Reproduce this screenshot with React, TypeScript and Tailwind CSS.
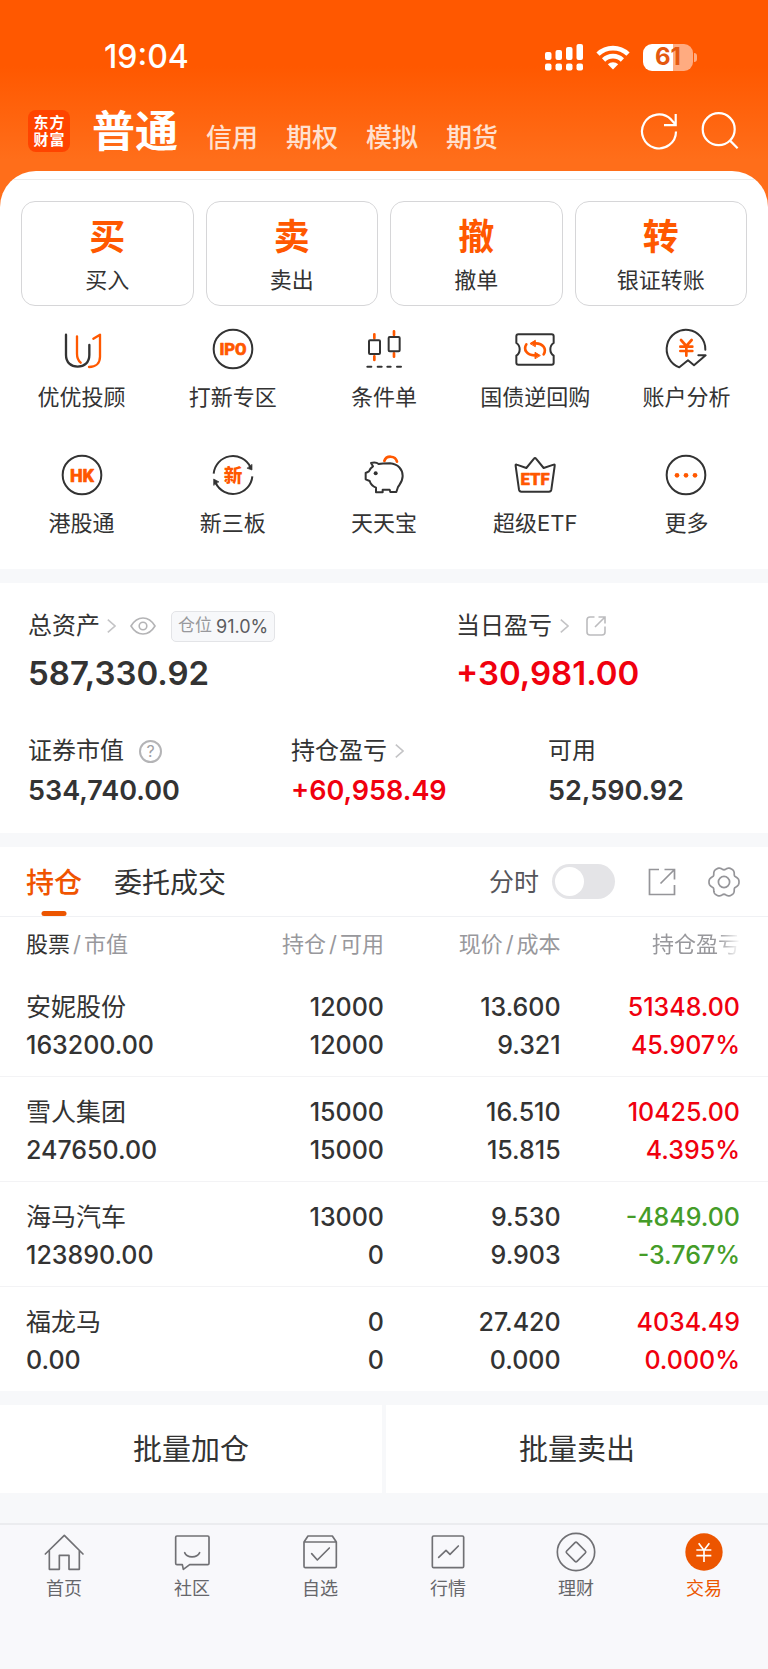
import type { ReactNode } from "react";

const INK = "#333333";
const ORANGE = "#ff5800";

type IconProps = { children: ReactNode; color?: string; width?: number };

function Glyph({ children, color = INK, width = 6 }: IconProps) {
  return (
    <svg
      viewBox="0 0 120 120"
      className="size-10 overflow-visible"
      fill="none"
      stroke={color}
      strokeWidth={width}
      strokeLinecap="round"
      strokeLinejoin="round"
      aria-hidden="true"
    >
      {children}
    </svg>
  );
}

function GlyphText({ children, size, y, stroke = 2 }: { children: string; size: number; y: number; stroke?: number }) {
  return (
    <text
      x="60"
      y={y}
      textAnchor="middle"
      fontSize={size}
      fontWeight="800"
      fontFamily="Roboto, 'Noto Sans CJK SC', sans-serif"
      fill={ORANGE}
      stroke={ORANGE}
      strokeWidth={stroke}
    >
      {children}
    </text>
  );
}

function Chevron() {
  return (
    <svg viewBox="0 0 9 14" className="h-[14px] w-[9px]" fill="none" stroke="#c4c4c6" strokeWidth="1.6" aria-hidden="true">
      <path d="M0.8 0.6 8 7 0.8 13.4" />
    </svg>
  );
}

function gearPath() {
  const points: string[] = [];
  for (let i = 0; i < 120; i++) {
    const t = (i / 120) * Math.PI * 2;
    const r = 13.9 + 1.4 * Math.cos(6 * t) - 0.3 * Math.cos(12 * t);
    points.push(`${(16 + r * Math.cos(t)).toFixed(2)} ${(16 + r * Math.sin(t)).toFixed(2)}`);
  }
  return `M${points.join("L")}Z`;
}

const accounts = ["信用", "期权", "模拟", "期货"];

const actions = [
  { mark: "买", label: "买入" },
  { mark: "卖", label: "卖出" },
  { mark: "撤", label: "撤单" },
  { mark: "转", label: "银证转账" },
];

const services: { label: string; icon: ReactNode }[] = [
  {
    label: "优优投顾",
    icon: (
      <Glyph width={7}>
        <path d="M12 17V78C12 101 27 113 47 113S82 101 82 78V48" />
        <path stroke={ORANGE} d="M45 22V74C45 88 50 96 56 101M94 29L114 17V83C114 102 102 114 81 114" />
      </Glyph>
    ),
  },
  {
    label: "打新专区",
    icon: (
      <Glyph>
        <circle cx="60" cy="60" r="58" />
        <GlyphText size={50} y={79}>IPO</GlyphText>
      </Glyph>
    ),
  },
  {
    label: "条件单",
    icon: (
      <Glyph>
        <path stroke={ORANGE} strokeWidth="8" d="M31 16V28M31 82V93M90 7V18M90 73V83" />
        <rect x="15" y="34" width="33" height="41" rx="3" />
        <rect x="74" y="24" width="33" height="43" rx="3" />
        <path d="M10 113H22M41 113H53M70 113H80M99 113H111" />
      </Glyph>
    ),
  },
  {
    label: "国债逆回购",
    icon: (
      <Glyph>
        <path d="M10 16H110Q116 16 116 22V42Q106 48 106 61T116 80V101Q116 107 110 107H10Q4 107 4 101V80Q14 74 14 61T4 42V22Q4 16 10 16Z" />
        <path stroke={ORANGE} strokeWidth="8" d="M86 76C96 60 84 43 62 43M34 46C24 62 36 79 58 79" />
        <path fill={ORANGE} stroke={ORANGE} strokeWidth="3" d="M46 43L61 34V52ZM75 79L60 70V88Z" />
      </Glyph>
    ),
  },
  {
    label: "账户分析",
    icon: (
      <Glyph>
        <path d="M118 62A58 58 0 1 0 40 115L66 94L84 109L119 79H97" />
        <path stroke={ORANGE} strokeWidth="8" d="M45 33L61 51L77 33M61 51V80M43 53H79M43 66H79" />
      </Glyph>
    ),
  },
  {
    label: "港股通",
    icon: (
      <Glyph>
        <circle cx="60" cy="60" r="58" />
        <GlyphText size={54} y={80}>HK</GlyphText>
      </Glyph>
    ),
  },
  {
    label: "新三板",
    icon: (
      <Glyph>
        <path strokeLinecap="butt" d="M2 56A58 58 0 0 1 112 36M118 64A58 58 0 0 1 8 84" />
        <path fill={INK} strokeWidth="2" d="M117 29V45L103 40ZM2 90V72L17 80Z" />
        <GlyphText size={56} y={81} stroke={0}>新</GlyphText>
      </Glyph>
    ),
  },
  {
    label: "天天宝",
    icon: (
      <Glyph>
        <path stroke={ORANGE} strokeWidth="8" d="M61 18C66 1 94 0 99 20" />
        <path d="M21 24C29 22 38 22 44 27C54 25 66 25 78 25C103 27 116 44 116 63C116 80 107 88 102 96L97 111H79L77 104H56V112H36V98C26 94 20 88 17 78L5 73V54L15 49C17 42 21 38 27 34Z" />
        <circle cx="35" cy="55" r="6" fill={INK} stroke="none" />
      </Glyph>
    ),
  },
  {
    label: "超级ETF",
    icon: (
      <Glyph>
        <path d="M5 29Q1 27 2 33L12 104Q13 110 19 110H102Q108 110 109 104L119 33Q120 27 116 29L86 39L63 11Q60 7 57 11L34 39Z" />
        <GlyphText size={50} y={90}>ETF</GlyphText>
      </Glyph>
    ),
  },
  {
    label: "更多",
    icon: (
      <Glyph>
        <circle cx="60" cy="60" r="58" />
        <g fill={ORANGE} stroke="none">
          <circle cx="33" cy="61" r="7" />
          <circle cx="60" cy="61" r="7" />
          <circle cx="87" cy="61" r="7" />
        </g>
      </Glyph>
    ),
  },
];

const holdings = [
  { name: "安妮股份", value: "163200.00", held: "12000", free: "12000", price: "13.600", cost: "9.321", profit: "51348.00", rate: "45.907%", up: true },
  { name: "雪人集团", value: "247650.00", held: "15000", free: "15000", price: "16.510", cost: "15.815", profit: "10425.00", rate: "4.395%", up: true },
  { name: "海马汽车", value: "123890.00", held: "13000", free: "0", price: "9.530", cost: "9.903", profit: "-4849.00", rate: "-3.767%", up: false },
  { name: "福龙马", value: "0.00", held: "0", free: "0", price: "27.420", cost: "0.000", profit: "4034.49", rate: "0.000%", up: true },
];

const GREY = "#707074";

const tabs: { label: string; active?: boolean; icon: ReactNode }[] = [
  {
    label: "首页",
    icon: (
      <Glyph color={GREY} width={5}>
        <path d="M4 66L61 10L117 66M16 56V112H46V70H75V112H106V56" />
      </Glyph>
    ),
  },
  {
    label: "社区",
    icon: (
      <Glyph color={GREY} width={5}>
        <path d="M15 12H107Q111 12 111 16V94Q111 98 107 98H53L34 112L31 98H15Q11 98 11 94V16Q11 12 15 12ZM38 62C45 79 75 79 83 62" />
      </Glyph>
    ),
  },
  {
    label: "自选",
    icon: (
      <Glyph color={GREY} width={5}>
        <path d="M12 30L24 12H97L109 30V103Q109 107 105 107H16Q12 107 12 103ZM12 30H109M35 65L52 84L88 48" />
      </Glyph>
    ),
  },
  {
    label: "行情",
    icon: (
      <Glyph color={GREY} width={5}>
        <rect x="13" y="12" width="94" height="95" rx="4" />
        <path d="M32 76L54 55L66 67L91 42" />
      </Glyph>
    ),
  },
  {
    label: "理财",
    icon: (
      <Glyph color={GREY} width={5}>
        <circle cx="60" cy="60" r="56" />
        <path d="M57 32Q60 29 63 32L88 57Q91 60 88 63L63 88Q60 91 57 88L32 63Q29 60 32 57Z" />
      </Glyph>
    ),
  },
  {
    label: "交易",
    active: true,
    icon: (
      <Glyph color="#ffffff" width={5}>
        <circle cx="60" cy="60" r="56" fill="#ec5500" stroke="none" />
        <path strokeLinecap="butt" d="M44 34L60 55L76 34M60 55V90M37 54H82M37 71H82" />
      </Glyph>
    ),
  },
];

function StatusBar() {
  return (
    <div className="flex h-[42px] items-center justify-between pr-[71px] pl-[104px]">
      <time className="text-[32px] font-medium">19:04</time>
      <div className="flex items-center gap-[13px]">
        <svg viewBox="0 0 38 27" className="h-[27px] w-[38px]" fill="#fff" aria-hidden="true">
          <rect x="0" y="8" width="6.5" height="8" rx="2" />
          <rect x="10.5" y="6" width="6.5" height="10" rx="2" />
          <rect x="21" y="3" width="6.5" height="13" rx="2" />
          <rect x="31.5" y="0" width="6.5" height="16" rx="2" />
          <rect x="0" y="19.5" width="6.5" height="7" rx="2" />
          <rect x="10.5" y="19.5" width="6.5" height="7" rx="2" />
          <rect x="21" y="19.5" width="6.5" height="7" rx="2" />
          <rect x="31.5" y="19.5" width="6.5" height="7" rx="2" />
        </svg>
        <svg viewBox="0 0 34 25" className="h-[25px] w-[34px]" fill="none" stroke="#fff" strokeWidth="4.6" aria-hidden="true">
          <path d="M2 9.2A21.5 21.5 0 0 1 32 9.2" />
          <path d="M7.6 15A13.4 13.4 0 0 1 26.4 15" />
          <path d="M17 24.5 11.8 19.3A7.6 7.6 0 0 1 22.2 19.3Z" fill="#fff" stroke="none" />
        </svg>
        <div className="flex items-center gap-[1px]">
          <div className="flex h-[27px] w-[50px] items-center justify-center rounded-[9px] bg-[linear-gradient(90deg,#ffffff_60%,#ffab80_60%)] text-[24px] font-bold text-[#e4580f]">
            61
          </div>
          <div className="h-[9px] w-[3px] rounded-r-full bg-[#ffab80]" />
        </div>
      </div>
    </div>
  );
}

function Header() {
  return (
    <header className="pt-9 pb-[1px] text-white">
      <StatusBar />
      <div className="mt-[14px] flex h-[78px] items-center pr-[29px] pl-7">
        <div className="grid size-[42px] grid-cols-[16px_16px] content-center justify-center rounded-lg bg-[#ff4400] text-center text-[15px] leading-[17px] font-bold">
          <span>东</span>
          <span>方</span>
          <span>财</span>
          <span>富</span>
        </div>
        <nav className="ml-[22px] flex items-baseline gap-7">
          <button type="button" className="text-[43px] leading-[60px] font-bold">普通</button>
          <span className="flex items-baseline gap-7">
            {accounts.map((name) => (
              <button key={name} type="button" className="text-[26px] leading-[40px] font-medium text-[#ffe0cf]">
                {name}
              </button>
            ))}
          </span>
        </nav>
        <div className="ml-auto flex items-center gap-[23px]">
          <button type="button" aria-label="刷新">
            <svg viewBox="0 0 38 38" className="size-[38px]" fill="none" stroke="#fff" strokeWidth="2.2" aria-hidden="true">
              <path d="M36 19.5A17 17 0 1 1 31 7.4L35.6 12.6M35.7 2V13.2H24" />
            </svg>
          </button>
          <button type="button" aria-label="搜索">
            <svg viewBox="0 0 38 38" className="size-[38px]" fill="none" stroke="#fff" strokeWidth="2.2" aria-hidden="true">
              <circle cx="17.7" cy="17.2" r="16" />
              <path d="M28.8 28.4 36.6 36.2" />
            </svg>
          </button>
        </div>
      </div>
    </header>
  );
}

function Shortcuts() {
  return (
    <section className="overflow-hidden rounded-t-[36px] bg-white pt-2">
      <div className="border-t border-[#ececec] px-[21px] pt-[21px]">
        <div className="grid grid-cols-4 gap-3">
          {actions.map((a) => (
            <button key={a.label} type="button" className="flex flex-col items-center gap-[6px] rounded-[14px] border border-[#d6d6d8] pt-[13px] pb-[10px]">
              <span className="text-[36px] leading-[44px] font-bold text-[#ff5800]">{a.mark}</span>
              <span className="text-[22px] leading-[30px]">{a.label}</span>
            </button>
          ))}
        </div>
      </div>
      <div className="mt-[23px] grid grid-cols-5 gap-y-[43px] px-[6px] pb-[31px]">
        {services.map((s) => (
          <button key={s.label} type="button" className="flex flex-col items-center gap-[13px]">
            {s.icon}
            <span className="text-[22px] leading-[30px]">{s.label}</span>
          </button>
        ))}
      </div>
    </section>
  );
}

function Assets() {
  return (
    <section className="mt-[14px] bg-white pt-[27px] pb-[26px] pl-7">
      <div className="grid grid-cols-[428fr_312fr]">
        <div>
          <div className="flex h-8 items-center text-[24px]">
            <span>总资产</span>
            <span className="ml-[7px]"><Chevron /></span>
            <button type="button" aria-label="隐藏金额" className="ml-[14px]">
              <svg viewBox="0 0 26 18" className="h-[18px] w-[26px]" fill="none" stroke="#b4b4b6" strokeWidth="1.6" aria-hidden="true">
                <path d="M1 9C4 4 8 1 13 1S22 4 25 9C22 14 18 17 13 17S4 14 1 9Z" />
                <circle cx="13" cy="9" r="3.8" />
              </svg>
            </button>
            <span className="ml-[15px] flex h-[31px] items-center gap-1 rounded-[5px] border border-[#e3e4e7] bg-[#f7f8fa] px-[6px] text-[18px] text-[#5c5c60]">
              <span className="text-[17px] text-[#98989c]">仓位</span>91.0%
            </span>
          </div>
          <p className="mt-[11px] text-[33px] leading-[40px] font-semibold">587,330.92</p>
        </div>
        <div>
          <div className="flex h-8 items-center text-[24px]">
            <span>当日盈亏</span>
            <span className="ml-2"><Chevron /></span>
            <button type="button" aria-label="分享盈亏" className="ml-[17px]">
              <svg viewBox="0 0 20 20" className="size-5" fill="none" stroke="#bcbcbe" strokeWidth="1.6" aria-hidden="true">
                <path d="M8.5 1H4Q1 1 1 4V16Q1 19 4 19H16Q19 19 19 16V10.5M9 11 18.5 1.5M12.5 1H19V7.5" />
              </svg>
            </button>
          </div>
          <p className="mt-[11px] text-[33px] leading-[40px] font-semibold text-[#f0000e]">+30,981.00</p>
        </div>
      </div>
      <div className="mt-[42px] grid grid-cols-[263fr_257fr_220fr]">
        <div>
          <div className="flex h-8 items-center text-[24px]">
            <span>证券市值</span>
            <button type="button" aria-label="说明" className="ml-[15px] flex size-[23px] items-center justify-center rounded-full border-2 border-[#b4b4b6] text-[16px] leading-none text-[#a0a0a4]">
              ?
            </button>
          </div>
          <p className="mt-2 text-[27px] leading-8 font-semibold">534,740.00</p>
        </div>
        <div>
          <div className="flex h-8 items-center text-[24px]">
            <span>持仓盈亏</span>
            <span className="ml-2"><Chevron /></span>
          </div>
          <p className="mt-2 text-[27px] leading-8 font-semibold text-[#f0000e]">+60,958.49</p>
        </div>
        <div>
          <div className="flex h-8 items-center text-[24px]">可用</div>
          <p className="mt-2 text-[27px] leading-8 font-semibold">52,590.92</p>
        </div>
      </div>
    </section>
  );
}

function HoldingsBar() {
  return (
    <div className="flex h-[70px] items-center border-b border-[#f0f1f4] pr-7 pl-[26px]">
      <button type="button" className="relative flex h-full items-center pt-[3px] text-[28px] font-medium text-[#f05400]">
        持仓
        <span className="absolute bottom-0 left-1/2 h-[5px] w-[25px] -translate-x-1/2 rounded-full bg-[#ec5500]" />
      </button>
      <button type="button" className="ml-8 pt-[3px] text-[28px]">委托成交</button>
      <label htmlFor="intraday" className="ml-auto pt-[2px] text-[25px] text-[#55555a]">分时</label>
      <input
        id="intraday"
        type="checkbox"
        className="ml-[13px] h-[35px] w-[63px] appearance-none rounded-full bg-[#e4e4e7] p-[3px] before:block before:size-[29px] before:rounded-full before:bg-white checked:bg-[#ff5800] checked:before:ml-auto"
      />
      <button type="button" aria-label="导出持仓" className="ml-[33px]">
        <svg viewBox="0 0 28 28" className="size-7" fill="none" stroke="#959599" strokeWidth="1.7" aria-hidden="true">
          <path d="M11 1.5H1.5V26.5H26.5V17M12.5 15.5 26 2M16.5 1.5H26.5V11.5" />
        </svg>
      </button>
      <button type="button" aria-label="设置" className="ml-8">
        <svg viewBox="0 0 32 32" className="size-8" fill="none" stroke="#959599" strokeWidth="1.7" strokeLinejoin="round" aria-hidden="true">
          <path d={gearPath()} />
          <circle cx="16" cy="16" r="5.6" />
        </svg>
      </button>
    </div>
  );
}

function Slash() {
  return <span className="mx-[3px]">/</span>;
}

function Holdings() {
  return (
    <section className="mt-[14px] bg-white">
      <HoldingsBar />
      <table className="w-full table-fixed border-collapse text-right">
        <thead>
          <tr className="h-[55px] text-[22px] text-[#98989c]">
            <th scope="col" className="w-[27%] pl-[26px] text-left font-normal">
              <span className="text-[#333333]">股票</span><Slash />市值
            </th>
            <th scope="col" className="w-[23%] font-normal">持仓<Slash />可用</th>
            <th scope="col" className="w-[23%] font-normal">现价<Slash />成本</th>
            <th scope="col" className="w-[27%] pr-7 font-normal">
              <span className="[mask-image:linear-gradient(to_right,#000_75%,transparent)]">持仓盈亏</span>
            </th>
          </tr>
        </thead>
        <tbody className="text-[25px] leading-[38px] font-medium">
          {holdings.map((h) => (
            <tr key={h.name} className="border-b border-[#f3f3f5] last:border-b-0">
              <td className="pt-4 pb-3 pl-[26px] text-left">
                <p className="font-normal">{h.name}</p>
                <p>{h.value}</p>
              </td>
              <td className="pt-4 pb-3">
                <p>{h.held}</p>
                <p>{h.free}</p>
              </td>
              <td className="pt-4 pb-3">
                <p>{h.price}</p>
                <p>{h.cost}</p>
              </td>
              <td className={h.up ? "pt-4 pr-7 pb-3 text-[#f0000e]" : "pt-4 pr-7 pb-3 text-[#449c28]"}>
                <p>{h.profit}</p>
                <p>{h.rate}</p>
              </td>
            </tr>
          ))}
        </tbody>
      </table>
    </section>
  );
}

export default function App() {
  return (
    <div className="min-h-screen bg-[#f7f8fa] font-[Inter,'Noto_Sans_CJK_SC',sans-serif] text-[#333333]">
      <div className="bg-[linear-gradient(#ff5800_66px,#ff6e1a_160px)]">
        <Header />
        <Shortcuts />
      </div>
      <Assets />
      <Holdings />
      <div className="mt-[14px] grid grid-cols-2 gap-1">
        <button type="button" className="h-[88px] bg-white pt-[2px] text-[29px]">批量加仓</button>
        <button type="button" className="h-[88px] bg-white pt-[2px] text-[29px]">批量卖出</button>
      </div>
      <nav className="mt-[30px] grid grid-cols-6 border-t-2 border-[#ebecef] bg-[#f8f8fb] pt-[7px] pb-[66px]">
        {tabs.map((t) => (
          <a
            key={t.label}
            href="#"
            aria-current={t.active ? "page" : undefined}
            className={t.active ? "flex flex-col items-center gap-[5px] text-[#ec5500]" : "flex flex-col items-center gap-[5px] text-[#66666a]"}
          >
            {t.icon}
            <span className="text-[18px] leading-6">{t.label}</span>
          </a>
        ))}
      </nav>
    </div>
  );
}
